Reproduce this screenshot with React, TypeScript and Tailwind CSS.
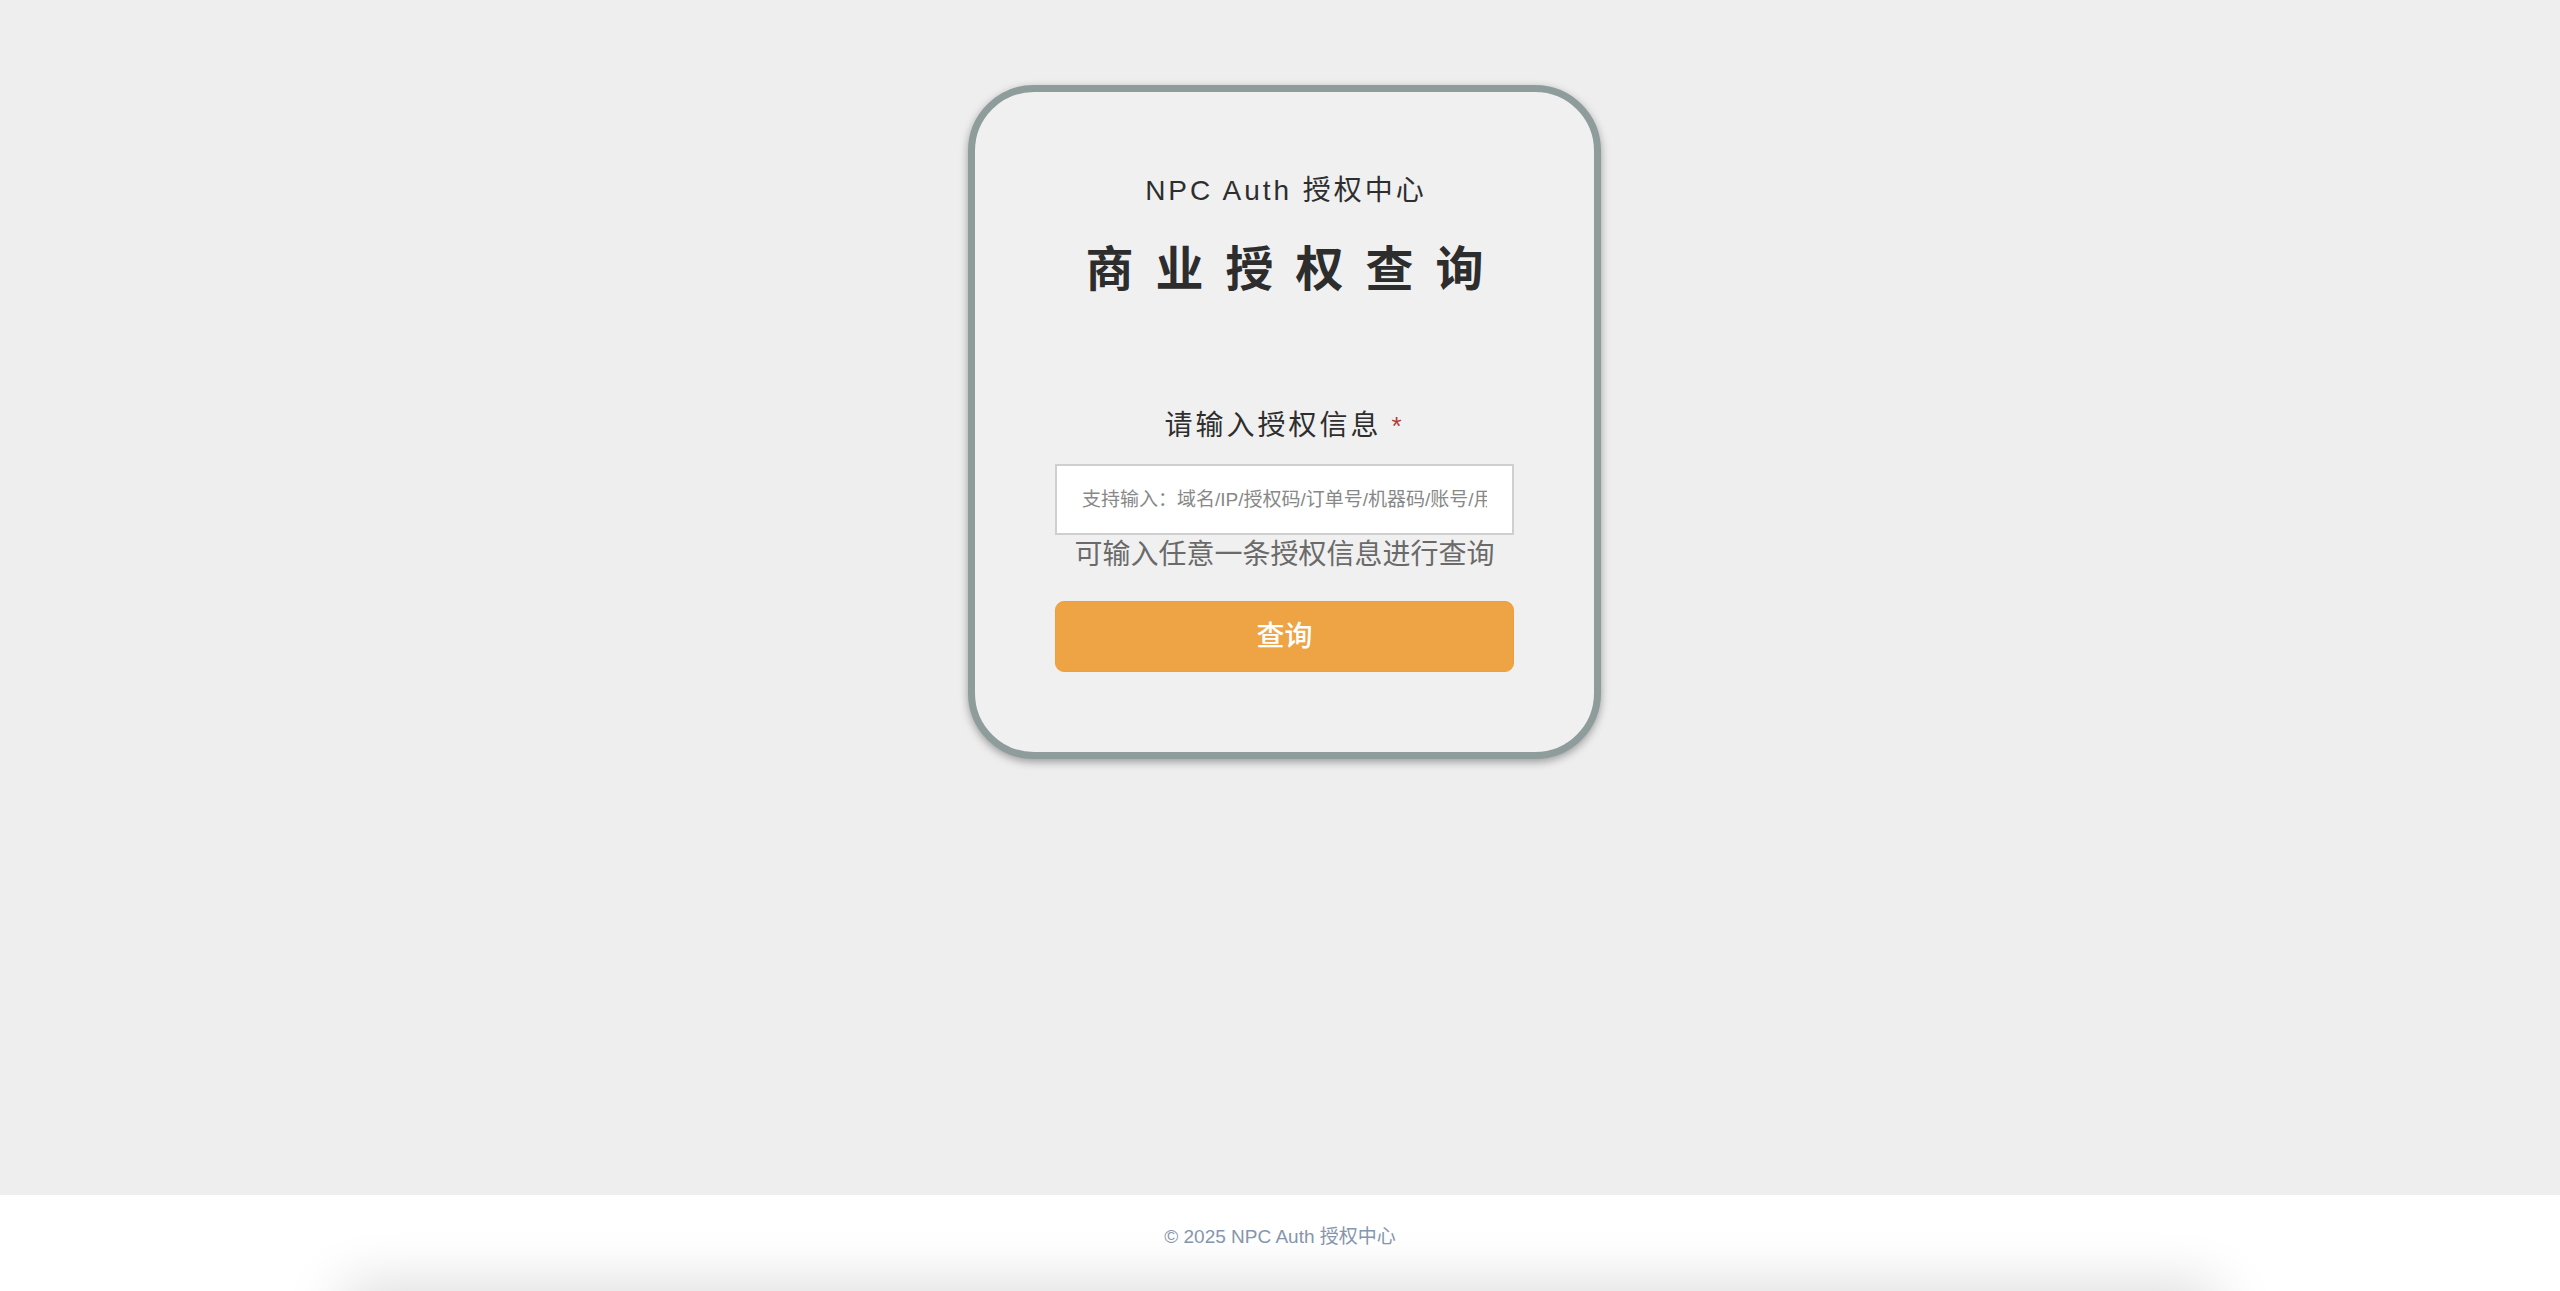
import React from "react";

const placeholder = "支持输入：域名/IP/授权码/订单号/机器码/账号/用户名";

function QueryCard() {
  const [value, setValue] = React.useState("");

  return (
    <div className="w-[633px] rounded-[66px] border-[7px] border-[#8e9c9b] bg-[#f0f0f0] px-[80px] pt-[79px] pb-[80px] shadow-[0_3px_8px_rgba(0,0,0,0.35)]">
      <div className="text-center text-[28px] leading-[40px] tracking-[3px] text-[#2e2e2e] pl-[3px]">
        NPC Auth 授权中心
      </div>
      <h1 className="mt-[29px] text-center text-[48px] font-bold leading-[60px] tracking-[22px] text-[#2d2d2d] pl-[22px]">
        商业授权查询
      </h1>

      <div className="mt-[106px] flex flex-col">
        <label className="text-center text-[28px] leading-[40px] tracking-[3px] text-[#2e2e2e]">
          请输入授权信息
          <span className="ml-[10px] align-top text-[26px] text-[#b23a3a]">*</span>
        </label>
        <input
          value={value}
          onChange={(e) => setValue(e.target.value)}
          placeholder={placeholder}
          className="mt-[18px] h-[71px] w-full border-2 border-[#cfcfcf] bg-white px-[25px] text-[19px] text-[#333] outline-none placeholder:text-[#888]"
        />
        <p className="text-center text-[28px] leading-[40px] text-[#6a6a6a]">
          可输入任意一条授权信息进行查询
        </p>
        <button className="mt-[26px] h-[71px] w-full rounded-[9px] border border-[#ef9f3a] bg-[#eea444] text-[28px] font-medium text-white">
          查询
        </button>
      </div>
    </div>
  );
}

export default function App() {
  return (
    <div
      className="flex min-h-screen flex-col bg-[#eeeeee]"
      style={{ fontFamily: '"Liberation Sans", "Noto Sans CJK SC", sans-serif' }}
    >
      <main className="flex flex-1 justify-center pl-[9px] pt-[85px]">
        <div>
          <QueryCard />
        </div>
      </main>
      <footer className="relative h-[96px] overflow-hidden bg-white">
        <p className="pt-[28px] text-center text-[19px] leading-[28px] text-[#8796ae]">
          © 2025 NPC Auth 授权中心
        </p>
        <div className="absolute left-[340px] right-[340px] top-full h-[40px] rounded-[40px] shadow-[0_0_60px_rgba(0,0,0,0.2)]" />
      </footer>
    </div>
  );
}
